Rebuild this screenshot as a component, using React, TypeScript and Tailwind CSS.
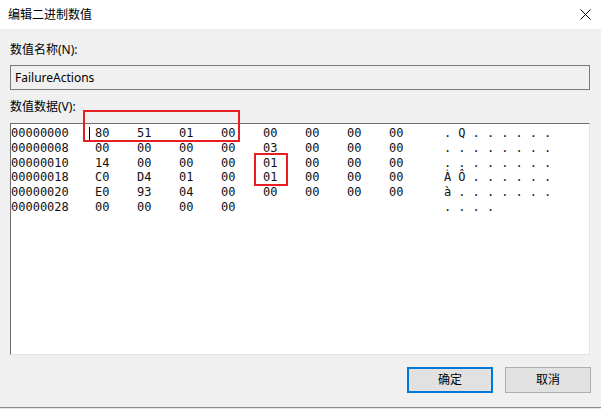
import React from "react";

const ui = { fontFamily: '"Noto Sans", "Noto Sans CJK SC", sans-serif' };
const mono = { fontFamily: '"DejaVu Sans Mono", "Liberation Mono", monospace' };

// rows of the binary value editor
const rows: { addr: string; bytes: string[]; ascii: string[] }[] = [
  { addr: "00000000", bytes: ["80", "51", "01", "00", "00", "00", "00", "00"], ascii: [".", "Q", ".", ".", ".", ".", ".", "."] },
  { addr: "00000008", bytes: ["00", "00", "00", "00", "03", "00", "00", "00"], ascii: [".", ".", ".", ".", ".", ".", ".", "."] },
  { addr: "00000010", bytes: ["14", "00", "00", "00", "01", "00", "00", "00"], ascii: [".", ".", ".", ".", ".", ".", ".", "."] },
  { addr: "00000018", bytes: ["C0", "D4", "01", "00", "01", "00", "00", "00"], ascii: ["À", "Ô", ".", ".", ".", ".", ".", "."] },
  { addr: "00000020", bytes: ["E0", "93", "04", "00", "00", "00", "00", "00"], ascii: ["à", ".", ".", ".", ".", ".", ".", "."] },
  { addr: "00000028", bytes: ["00", "00", "00", "00"], ascii: [".", ".", ".", "."] },
];

function HexRow({ addr, bytes, ascii }: { addr: string; bytes: string[]; ascii: string[] }) {
  return (
    <div className="flex h-[14.67px] items-center whitespace-pre">
      <span className="w-[84px] shrink-0">{addr}</span>
      <div className="flex w-[336px] shrink-0">
        {bytes.map((b, i) => (
          <span key={i} className="w-[42px] shrink-0">{b}</span>
        ))}
      </div>
      <div className="ml-[13px] flex">
        {ascii.map((c, i) => (
          <span key={i} className="w-[14.3px] shrink-0">{c}</span>
        ))}
      </div>
    </div>
  );
}

export default function App() {
  return (
    <div className="relative h-[409px] w-[601px] overflow-hidden bg-[#f0f0f0] text-black" style={ui}>
      {/* title bar */}
      <div className="flex h-[29px] items-center justify-between bg-white pl-[8px] pr-[10px]">
        <span className="text-[12px]">编辑二进制数值</span>
        <svg width="11" height="11" viewBox="0 0 11 11">
          <path d="M0.5 0.5 L10.5 10.5 M10.5 0.5 L0.5 10.5" stroke="#000" strokeWidth="1" />
        </svg>
      </div>

      {/* body */}
      <div className="flex h-[378px] flex-col px-[10px]">
        <div className="mt-[13px] h-[16px] text-[12px] leading-[16px]">数值名称(N):</div>
        <div className="mt-[7px] flex h-[25px] w-[580px] items-center border border-[#7a7a7a] bg-[#f0f0f0] pl-[4px] text-[12px]">
          FailureActions
        </div>
        <div className="mt-[9px] h-[16px] text-[12px] leading-[16px]">数值数据(V):</div>
        <div className="relative mt-[8px] h-[232px] w-[580px] border border-b-[#e3e3e3] border-l-[#6d6d6d] border-r-[#e3e3e3] border-t-[#6d6d6d] bg-white pt-[2px] text-[12px] text-[#111]" style={mono}>
          {rows.map((r) => (
            <HexRow key={r.addr} {...r} />
          ))}
          {/* caret */}
          <div className="absolute left-[78px] top-[3px] h-[15px] w-px bg-black" />
        </div>
        <div className="mt-[12px] flex justify-end gap-[12px]">
          <button className="flex h-[26px] w-[86px] items-center justify-center border-2 border-[#0078d7] bg-[#e1e1e1] text-[12px]">
            确定
          </button>
          <button className="flex h-[26px] w-[86px] items-center justify-center border border-[#adadad] bg-[#e1e1e1] text-[12px]">
            取消
          </button>
        </div>
      </div>

      {/* window bottom edge */}
      <div className="h-px bg-[#8a8a8a]" />
      <div className="h-[1px] bg-[#e6e6e6]" />

      {/* red annotations */}
      <div className="absolute left-[83px] top-[110px] h-[32px] w-[157px] border-2 border-[#e81e25]" />
      <div className="absolute left-[254px] top-[153px] h-[33px] w-[34px] border-2 border-[#e81e25]" />
    </div>
  );
}
